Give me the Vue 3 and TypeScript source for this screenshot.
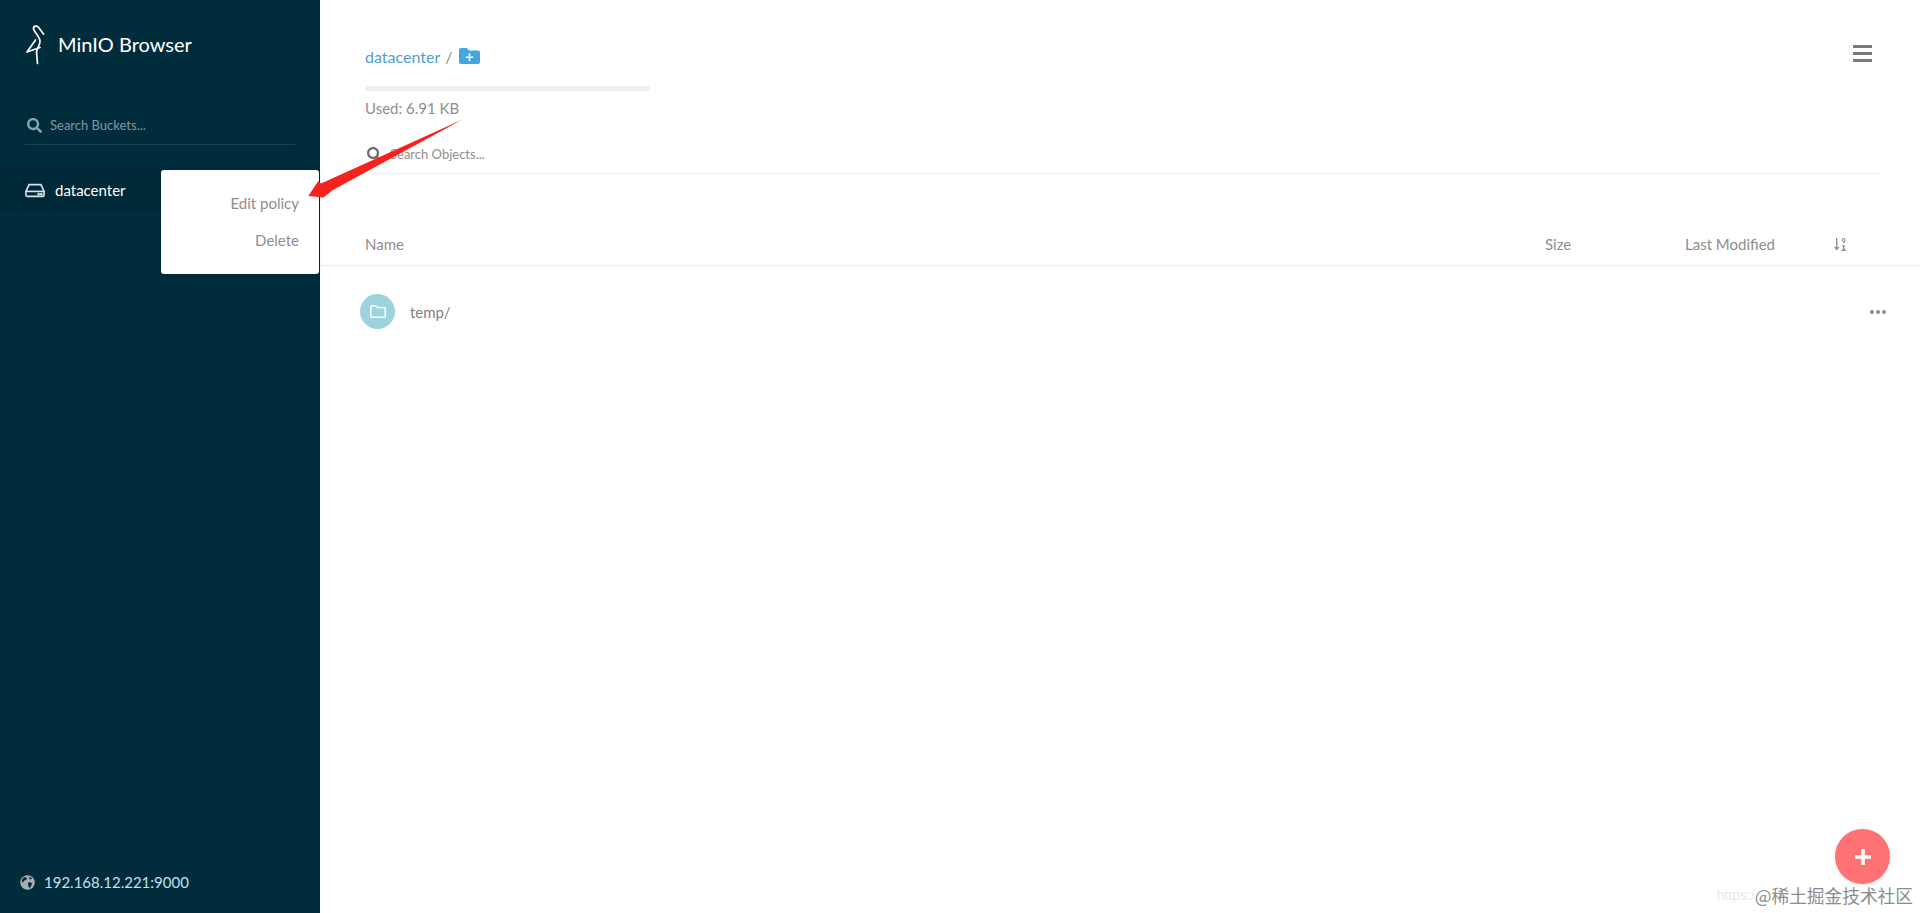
<template>
  <div class="page">
    <aside class="sidebar">
      <div class="logo">
        <svg class="bird" viewBox="0 0 20 40" width="20" height="40" fill="none" stroke="#fff" stroke-width="1.700" stroke-linecap="round" stroke-linejoin="round">
          <path d="M18.500 9L14 3C12.500.5 8.500.5 8.500 3.500 8.500 7 15 11 15 16.500 15 20 12 23 11.500 27L12.500 38.500" />
          <path d="M10.500 15L2 27 15 22.500" />
        </svg>
        <span class="logo-text">MinIO Browser</span>
      </div>
      <div class="bucket-search">
        <svg class="search-icon" viewBox="0 0 512 512" width="15" height="15" fill="#8ba5ac">
          <path :d="searchPath" />
        </svg>
        <span>Search Buckets...</span>
      </div>
      <div class="bucket-row">
        <svg viewBox="0 0 22 16" width="20" height="15" fill="none" stroke="#d6e2e6" stroke-width="1.800">
          <path d="M1 9l3.500-7.500h13L21 9v4a1.500 1.500 0 0 1-1.500 1.500h-17A1.500 1.500 0 0 1 1 13z" />
          <path d="M1 9h20" />
          <circle cx="15" cy="12" r=".6" fill="#d6e2e6" />
          <circle cx="18" cy="12" r=".6" fill="#d6e2e6" />
        </svg>
        <span>datacenter</span>
      </div>
      <div class="bucket-menu">
        <a>Edit policy</a>
        <a>Delete</a>
      </div>
      <div class="host">
        <svg viewBox="0 0 512 512" width="15" height="15">
          <circle cx="256" cy="256" r="248" fill="#a5adaf" />
          <path fill="#012c3b" d="M150 70l90 30-30 70-70 20-30 70-50-40c10-70 40-120 90-150zM300 240l110 30-20 90-60 90-40-60-20-90zM340 60l70 60-60 30-40-50z" />
        </svg>
        <span>192.168.12.221:9000</span>
      </div>
    </aside>

    <main class="content">
      <header class="top">
        <div class="top-left">
          <div class="crumbs">
            <a>datacenter</a>
            <span class="slash">/</span>
            <svg viewBox="0 0 21 16" width="21" height="16">
              <path fill="#46a5e0" d="M0 2a2 2 0 0 1 2-2h6l2 2.500h9a2 2 0 0 1 2 2V14a2 2 0 0 1-2 2H2a2 2 0 0 1-2-2z" />
              <path fill="#fff" d="M9.700 5.500h1.600v3h3v1.600h-3v3H9.700v-3h-3V8.500h3z" />
            </svg>
          </div>
          <div class="usage"></div>
          <div class="used">Used: 6.91 KB</div>
        </div>
        <div class="burger"><i></i><i></i><i></i></div>
      </header>

      <div class="object-search">
        <svg viewBox="0 0 512 512" width="15" height="15" fill="#6f6f6f">
          <path :d="searchPath" />
        </svg>
        <span>Search Objects...</span>
      </div>

      <div class="list-head">
        <span class="col-name">Name</span>
        <span class="col-size">Size</span>
        <span class="col-date">Last Modified</span>
        <svg class="sort" viewBox="0 0 14 14" width="14" height="14" fill="#8e8e8e">
          <path d="M3 1h1.400v9H6.500L3.700 13.500 1 10h2z" />
          <path fill-rule="evenodd" d="M10.500 1a2 2 0 0 1 2 2.200c0 1.500-1 2.800-2.500 3V5.300c.5-.1.900-.3 1.100-.7-1.400.2-2.500-.6-2.500-1.700 0-1.100 1-1.900 1.900-1.900zm0 1a.9.900 0 1 0 0 1.800.9.900 0 0 0 0-1.800zM10 8h1.500v4.500H13V14H8.500v-1.500H10V9.500H8.500z" />
        </svg>
      </div>

      <div v-for="item in items" :key="item" class="row">
        <div class="folder-badge">
          <svg viewBox="0 0 16 13" width="16" height="13" fill="none" stroke="#fff" stroke-width="1.500">
            <path d="M.8 2A1.200 1.200 0 0 1 2 .8h3.500l1.500 1.700h7A1.200 1.200 0 0 1 15.200 3.700V11A1.200 1.200 0 0 1 14 12.200H2A1.200 1.200 0 0 1 .8 11z" />
          </svg>
        </div>
        <span class="row-name">{{ item }}</span>
        <div class="dots"><i></i><i></i><i></i></div>
      </div>
    </main>

    <svg class="arrow" viewBox="0 0 170 90" width="170" height="90">
      <path fill="#f8221c" d="M1.300 77L11.300 62 14 64.500 155.500.5 26 71 16.300 78.500z" />
    </svg>

    <div class="fab">
      <svg viewBox="0 0 16 16" width="16" height="16">
        <path fill="#fff" d="M6.200 0h3.600v6.200H16v3.600H9.800V16H6.200V9.800H0V6.200h6.200z" />
      </svg>
    </div>

    <div class="watermark">
      <span class="wm-url">https:/</span>
      <span class="wm-name">@稀土掘金技术社区</span>
    </div>
  </div>
</template>

<script setup lang="ts">
const items: string[] = ['temp/']

const searchPath =
  'M505 442.700L405.300 343c-4.500-4.500-10.600-7-17-7H372c27.600-35.300 44-79.700 44-128C416 93.100 322.900 0 208 0S0 93.100 0 208s93.100 208 208 208c48.300 0 92.700-16.400 128-44v16.300c0 6.400 2.500 12.500 7 17l99.700 99.700c9.400 9.400 24.600 9.400 33.900 0l28.300-28.300c9.400-9.400 9.400-24.600.1-34zM208 336c-70.700 0-128-57.200-128-128 0-70.700 57.200-128 128-128 70.700 0 128 57.200 128 128 0 70.700-57.200 128-128 128z'
</script>

<style>
html,
body {
  margin: 0;
  background: #fff;
}
</style>

<style scoped>
.page {
  position: relative;
  display: flex;
  width: 1920px;
  height: 913px;
  overflow: hidden;
  font-family: Lato, "Noto Sans", sans-serif;
  color: #8e8e8e;
  background: #fff;
}

.sidebar {
  position: relative;
  display: flex;
  flex-direction: column;
  flex: 0 0 320px;
  box-sizing: border-box;
  background: #012c3b;
}

.logo {
  display: flex;
  align-items: center;
  gap: 13px;
  padding: 25px 0 0 25px;
  height: 40px;
}

.logo-text {
  color: #fff;
  font-size: 20px;
  line-height: 40px;
  margin-top: -2px;
}

.bucket-search {
  display: flex;
  align-items: center;
  gap: 8px;
  margin: 48px 25px 0 25px;
  padding: 0 0 7px 2px;
  height: 24px;
  border-bottom: 1px solid rgba(255, 255, 255, 0.1);
  color: #7f99a1;
  font-size: 13px;
}

.bucket-row {
  display: flex;
  align-items: center;
  gap: 10px;
  margin-top: 24px;
  padding: 0 0 0 25px;
  height: 42px;
  color: #fff;
  font-size: 15px;
  background: rgba(0, 0, 0, 0.05);
}

.bucket-menu {
  position: absolute;
  top: 170px;
  left: 161px;
  display: flex;
  flex-direction: column;
  box-sizing: border-box;
  width: 158px;
  height: 104px;
  padding: 23px 20px 0 0;
  gap: 16px;
  text-align: right;
  background: #fff;
  border-radius: 3px;
  font-size: 15px;
  line-height: 21px;
  color: #8e8e8e;
  box-shadow: 0 1px 4px rgba(0, 0, 0, 0.1);
}

.host {
  display: flex;
  align-items: center;
  gap: 9px;
  margin-top: auto;
  padding: 0 0 0 20px;
  height: 62px;
  color: #bfe3ee;
  font-size: 15px;
}

.content {
  flex: 1;
  min-width: 0;
}

.top {
  display: flex;
  justify-content: space-between;
  padding: 45px 48px 0 45px;
}

.crumbs {
  display: flex;
  align-items: center;
  height: 22px;
  font-size: 16px;
  color: #4f9fd6;
}

.slash {
  margin: 0 7px 0 5px;
  color: #8e8e8e;
}

.usage {
  width: 285px;
  height: 5px;
  margin-top: 19px;
  border-radius: 3px;
  background: #eeeeee;
}

.used {
  margin-top: 6px;
  font-size: 15px;
  line-height: 22px;
}

.burger {
  display: flex;
  flex-direction: column;
  gap: 4px;
  width: 19px;
  padding-top: 0;
}

.burger i {
  display: block;
  height: 3px;
  background: #7b7b7b;
}

.object-search {
  display: flex;
  align-items: center;
  gap: 8px;
  margin: 23px 40px 0 45px;
  padding: 0 0 7px 2px;
  height: 24px;
  border-bottom: 1px solid #eeeeee;
  font-size: 13px;
  color: #8e8e8e;
}

.list-head {
  display: flex;
  align-items: center;
  height: 42px;
  margin-top: 49px;
  padding: 0 0 0 45px;
  border-bottom: 1px solid #eeeeee;
  font-size: 15px;
}

.col-name {
  flex: 0 0 1180px;
}

.col-size {
  flex: 0 0 140px;
}

.col-date {
  flex: 0 0 148px;
}

.row {
  display: flex;
  align-items: center;
  height: 91px;
  padding: 0 34px 0 40px;
}

.folder-badge {
  display: flex;
  align-items: center;
  justify-content: center;
  width: 35px;
  height: 35px;
  border-radius: 50%;
  background: #9cd3dd;
}

.row-name {
  flex: 1;
  margin-left: 15px;
  font-size: 15px;
  color: #7f7f7f;
}

.dots {
  display: flex;
  gap: 2px;
}

.dots i {
  display: block;
  width: 4px;
  height: 4px;
  border-radius: 50%;
  background: #8e8e8e;
}

.arrow {
  position: absolute;
  top: 119px;
  left: 307px;
}

.fab {
  position: absolute;
  left: 1835px;
  top: 829px;
  display: flex;
  align-items: center;
  justify-content: center;
  width: 55px;
  height: 55px;
  border-radius: 50%;
  background: #ff7273;
  box-shadow: 0 1px 4px rgba(0, 0, 0, 0.1);
}

.watermark {
  position: absolute;
  right: 7px;
  bottom: 5px;
  display: flex;
  align-items: center;
  white-space: nowrap;
}

.wm-url {
  font-family: "Liberation Sans", sans-serif;
  font-size: 14px;
  color: #e8e8e8;
}

.wm-name {
  font-family: "Noto Sans CJK SC", sans-serif;
  font-size: 17.700px;
  color: #8c8c8c;
}
</style>
